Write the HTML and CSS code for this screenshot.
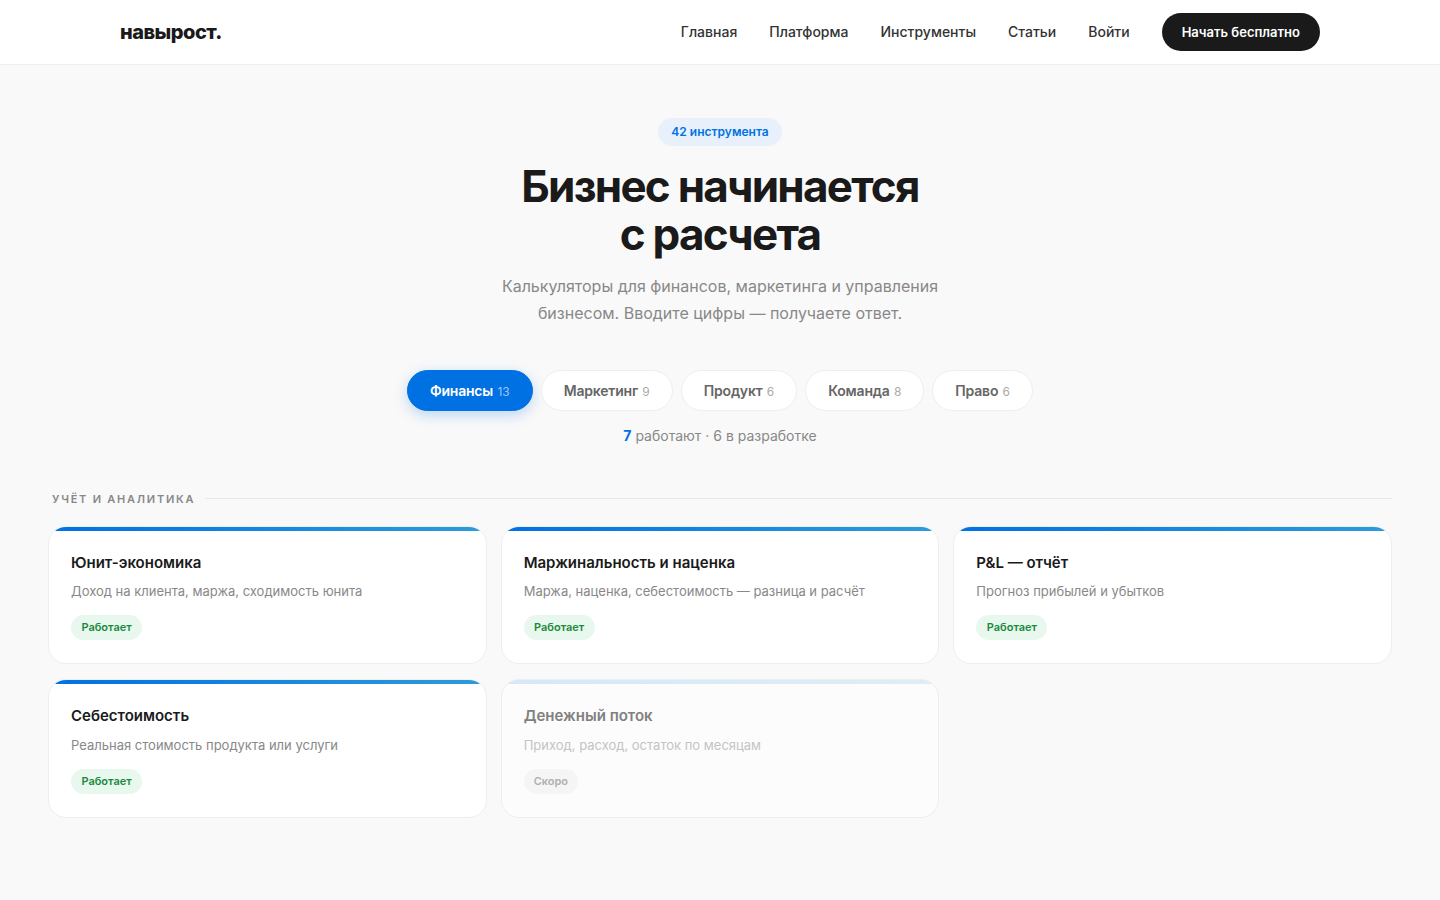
FILE: index.html
```html
<!DOCTYPE html>
<html lang="ru">
<head>
<meta charset="utf-8">
<title>навырост.</title>
<link rel="stylesheet" href="styles.css">
</head>
<body>
<header class="header">
  <a class="logo" href="#">навырост.</a>
  <nav class="nav">
    <a class="nav-link" href="#">Главная</a>
    <a class="nav-link" href="#">Платформа</a>
    <a class="nav-link" href="#">Инструменты</a>
    <a class="nav-link" href="#">Статьи</a>
    <a class="nav-link" href="#">Войти</a>
    <a class="cta" href="#">Начать бесплатно</a>
  </nav>
</header>
<main>
  <section class="hero">
    <span class="badge">42 инструмента</span>
    <h1>Бизнес начинается<br>с расчета</h1>
    <p class="lead">Калькуляторы для финансов, маркетинга и управления<br>бизнесом. Вводите цифры — получаете ответ.</p>
    <div class="tabs">
      <button class="tab active">Финансы <span class="count">13</span></button>
      <button class="tab">Маркетинг <span class="count">9</span></button>
      <button class="tab">Продукт <span class="count">6</span></button>
      <button class="tab">Команда <span class="count">8</span></button>
      <button class="tab">Право <span class="count">6</span></button>
    </div>
    <p class="status"><b>7</b> работают · 6 в разработке</p>
  </section>
  <section class="tools">
    <div class="section-head"><span>Учёт и аналитика</span></div>
    <div class="grid">
      <article class="card">
        <h3>Юнит-экономика</h3>
        <p>Доход на клиента, маржа, сходимость юнита</p>
        <span class="pill">Работает</span>
      </article>
      <article class="card">
        <h3>Маржинальность и наценка</h3>
        <p>Маржа, наценка, себестоимость — разница и расчёт</p>
        <span class="pill">Работает</span>
      </article>
      <article class="card">
        <h3>P&amp;L — отчёт</h3>
        <p>Прогноз прибылей и убытков</p>
        <span class="pill">Работает</span>
      </article>
      <article class="card">
        <h3>Себестоимость</h3>
        <p>Реальная стоимость продукта или услуги</p>
        <span class="pill">Работает</span>
      </article>
      <article class="card soon">
        <h3>Денежный поток</h3>
        <p>Приход, расход, остаток по месяцам</p>
        <span class="pill">Скоро</span>
      </article>
    </div>
  </section>
</main>
</body>
</html>
```
FILE: styles.css
```css
* { box-sizing: border-box; }
html, body { margin: 0; padding: 0; }
body {
  background: #f9f9f9;
  color: #1a1a1a;
  font-family: Inter, "Noto Sans", sans-serif;
  min-height: 900px;
}
a { color: inherit; text-decoration: none; }

.header {
  height: 65px;
  background: #fff;
  border-bottom: 1px solid #eee;
  display: flex;
  align-items: center;
  justify-content: space-between;
  padding: 0 120px;
}
.logo {
  font-size: 20px;
  font-weight: 800;
  letter-spacing: -0.5px;
  color: #1a1a1a;
}
.nav {
  display: flex;
  align-items: center;
  gap: 32px;
  font-size: 14px;
  font-weight: 500;
  color: #333;
}
.nav-link { padding-bottom: 2px; }
.cta {
  background: #1a1a1a;
  color: #fff;
  font-size: 13px;
  font-weight: 600;
  height: 38px;
  line-height: 38px;
  padding: 0 20px;
  border-radius: 19px;
}

.hero {
  display: flex;
  flex-direction: column;
  align-items: center;
  text-align: center;
  padding-top: 53px;
}
.badge {
  height: 28px;
  line-height: 28px;
  padding: 0 13.5px;
  border-radius: 14px;
  background: #e8f1fb;
  color: #0071e3;
  font-size: 12px;
  font-weight: 600;
}
h1 {
  margin: 16px 0 0;
  font-size: 44px;
  line-height: 48.4px;
  font-weight: 700;
  letter-spacing: -1.76px;
  color: #1a1a1a;
}
.lead {
  margin: 14px 0 0;
  font-size: 16px;
  line-height: 27px;
  color: #888;
}
.tabs {
  display: flex;
  gap: 8px;
  margin-top: 43px;
}
.tab {
  font-family: inherit;
  height: 41px;
  padding: 0 22px;
  border-radius: 21px;
  border: 1px solid #eee;
  background: #fff;
  color: #666;
  font-size: 14px;
  font-weight: 600;
  letter-spacing: -0.2px;
}
.tab .count {
  font-size: 12px;
  font-weight: 400;
  letter-spacing: 0;
  color: #aaa;
  margin-left: 1px;
}
.tab.active {
  background: #0071e3;
  border-color: #0071e3;
  color: #fff;
  box-shadow: 0 4px 14px rgba(0, 113, 227, 0.25);
}
.tab.active .count { color: rgba(255, 255, 255, 0.6); }
.status {
  margin: 16px 0 0;
  font-size: 14px;
  line-height: 18px;
  color: #888;
}
.status b { color: #0071e3; font-weight: 700; }

.tools { padding: 0 48px; margin-top: 47px; }
.section-head {
  display: flex;
  align-items: center;
  gap: 10px;
  padding-left: 4px;
  margin-bottom: 20px;
  font-size: 11px;
  line-height: 14px;
  font-weight: 600;
  letter-spacing: 1.76px;
  text-transform: uppercase;
  color: #888;
}
.section-head::after {
  content: "";
  flex: 1;
  height: 1px;
  background: #e8e8e8;
}
.grid {
  display: grid;
  grid-template-columns: repeat(3, 1fr);
  gap: 15px 14px;
}
.card {
  position: relative;
  overflow: hidden;
  height: 138.5px;
  padding: 26px 22px 0;
  background: #fff;
  border: 1px solid #eee;
  border-radius: 18px;
}
.card::before {
  content: "";
  position: absolute;
  top: 0;
  left: 0;
  right: 0;
  height: 4px;
  background: linear-gradient(90deg, #0071e3, #2d9cdb);
}
.card h3 {
  margin: 0;
  font-size: 15px;
  line-height: 20px;
  font-weight: 600;
  color: #1a1a1a;
}
.card p {
  margin: 8.5px 0 0;
  font-size: 13px;
  line-height: 20px;
  color: #888;
}
.pill {
  display: inline-block;
  margin-top: 14px;
  height: 25px;
  line-height: 25px;
  padding: 0 10.4px;
  border-radius: 13px;
  background: #e8f8ee;
  color: #1a8a3c;
  font-size: 11px;
  font-weight: 600;
}
.card.soon { background: #fcfcfc; }
.card.soon::before { opacity: 0.15; }
.card.soon h3 { color: #808080; }
.card.soon p { color: #c4c4c4; }
.card.soon .pill { background: #f5f5f5; color: #b0b0b0; padding: 0 10px; }
```
